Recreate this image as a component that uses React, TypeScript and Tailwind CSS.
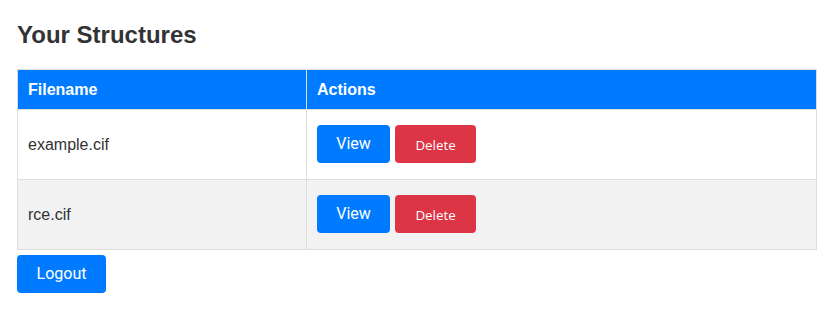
const files = ["example.cif", "rce.cif"];

export default function App() {
  return (
    <main className="min-h-screen bg-white pl-[17px] pr-[10px] pt-[21px] font-['Liberation_Sans',Arial,sans-serif] text-[#333]">
      <h1 className="text-[24px] font-bold leading-[28px] mb-[20px]">Your Structures</h1>

      {/* table of uploaded structures */}
      <table className="w-full border-collapse text-[16px]">
        <thead>
          <tr className="bg-[#007bff] text-white">
            <th className="w-[289px] border border-[#ddd] px-[10px] py-[10px] text-left font-bold leading-[19px]">
              Filename
            </th>
            <th className="border border-[#ddd] px-[10px] py-[10px] text-left font-bold leading-[19px]">
              Actions
            </th>
          </tr>
        </thead>
        <tbody>
          {files.map((f, i) => (
            <tr key={f} className={i % 2 === 1 ? "bg-[#f2f2f2]" : "bg-white"}>
              <td className="border border-[#ddd] px-[10px] pt-[16px] pb-[15px]">{f}</td>
              <td className="border border-[#ddd] px-[10px] pt-[15px] pb-[16px]">
                <div className="flex gap-[5px]">
                  <button className="h-[38px] w-[73px] rounded-[4px] bg-[#007bff] font-['Roboto',sans-serif] text-[16px] text-white">
                    View
                  </button>
                  <button className="h-[38px] w-[81px] rounded-[4px] bg-[#dc3545] pt-[4px] font-['Open_Sans',sans-serif] text-[13.33px] text-white">
                    Delete
                  </button>
                </div>
              </td>
            </tr>
          ))}
        </tbody>
      </table>

      <button className="mt-[5px] h-[38px] w-[89px] rounded-[4px] bg-[#007bff] font-['Roboto',sans-serif] text-[16px] text-white">
        Logout
      </button>
    </main>
  );
}
